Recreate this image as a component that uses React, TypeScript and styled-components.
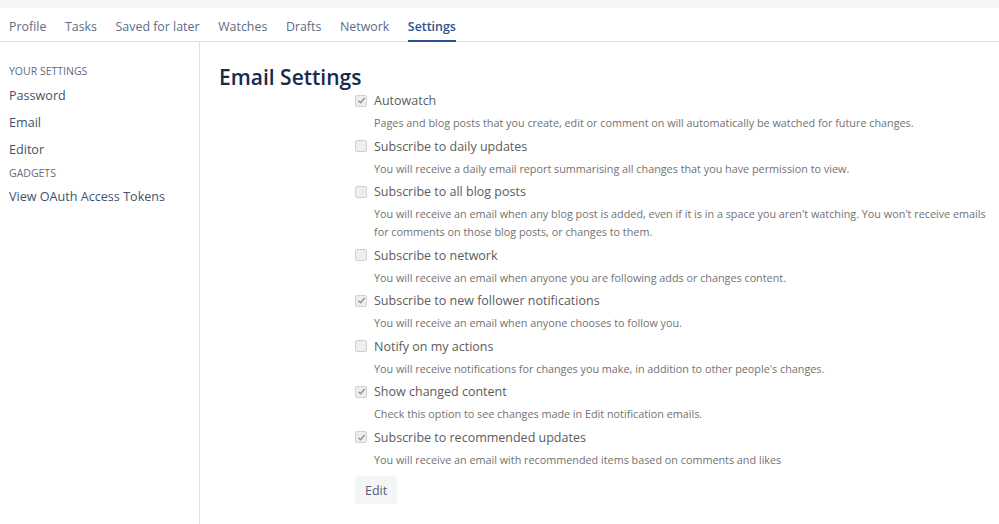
import React from 'react';
import styled, { createGlobalStyle } from 'styled-components';

const GlobalStyle = createGlobalStyle`
  html, body {
    margin: 0;
    padding: 0;
    background: #fff;
    font-family: "Open Sans", "Noto Sans", sans-serif;
  }
`;

type Option = {
  label: string;
  description: string;
  checked: boolean;
};

const options: Option[] = [
  {
    label: 'Autowatch',
    description:
      'Pages and blog posts that you create, edit or comment on will automatically be watched for future changes.',
    checked: true,
  },
  {
    label: 'Subscribe to daily updates',
    description: 'You will receive a daily email report summarising all changes that you have permission to view.',
    checked: false,
  },
  {
    label: 'Subscribe to all blog posts',
    description:
      "You will receive an email when any blog post is added, even if it is in a space you aren't watching. You won't receive emails for comments on those blog posts, or changes to them.",
    checked: false,
  },
  {
    label: 'Subscribe to network',
    description: 'You will receive an email when anyone you are following adds or changes content.',
    checked: false,
  },
  {
    label: 'Subscribe to new follower notifications',
    description: 'You will receive an email when anyone chooses to follow you.',
    checked: true,
  },
  {
    label: 'Notify on my actions',
    description: "You will receive notifications for changes you make, in addition to other people's changes.",
    checked: false,
  },
  {
    label: 'Show changed content',
    description: 'Check this option to see changes made in Edit notification emails.',
    checked: true,
  },
  {
    label: 'Subscribe to recommended updates',
    description: 'You will receive an email with recommended items based on comments and likes',
    checked: true,
  },
];

const tabs = ['Profile', 'Tasks', 'Saved for later', 'Watches', 'Drafts', 'Network', 'Settings'];

const App: React.FC = () => {
  return (
    <Page>
      <GlobalStyle />
      <TopStrip />
      <TabBar>
        {tabs.map((t) => (
          <Tab key={t} active={t === 'Settings'}>
            {t}
          </Tab>
        ))}
      </TabBar>
      <Body>
        <Sidebar>
          <SideHeading>Your Settings</SideHeading>
          <SideLink>Password</SideLink>
          <SideLink>Email</SideLink>
          <SideLink>Editor</SideLink>
          <SideHeading second>Gadgets</SideHeading>
          <SideLink>View OAuth Access Tokens</SideLink>
        </Sidebar>
        <Content>
          <Title>Email Settings</Title>
          <Form>
            {options.map((o) => (
              <Field key={o.label}>
                <LabelRow>
                  <Box>
                    {o.checked && (
                      <svg width="9" height="9" viewBox="0 0 9 9">
                        <path d="M1.5 4.8 L3.6 6.8 L7.6 2" fill="none" stroke="#8f8f8f" strokeWidth="1.4" />
                      </svg>
                    )}
                  </Box>
                  <Label>{o.label}</Label>
                </LabelRow>
                <Description>{o.description}</Description>
              </Field>
            ))}
            <EditButton>Edit</EditButton>
          </Form>
        </Content>
      </Body>
    </Page>
  );
};

const Page = styled.div`
  width: 999px;
  height: 524px;
  overflow: hidden;
  display: flex;
  flex-direction: column;
`;

const TopStrip = styled.div`
  height: 8px;
  background: #f4f5f7;
`;

const TabBar = styled.div`
  display: flex;
  gap: 18.6px;
  padding: 0 9px;
  height: 33px;
  border-bottom: 1px solid #dfe1e6;
`;

const Tab = styled.div<{ active?: boolean }>`
  display: flex;
  align-items: center;
  padding-top: 4px;
  font-size: 12.4px;
  color: ${({ active }) => (active ? '#2a5291' : '#5e6c84')};
  font-weight: ${({ active }) => (active ? 600 : 400)};
  border-bottom: 2px solid ${({ active }) => (active ? '#2a5291' : 'transparent')};
  margin-bottom: -1px;
`;

const Body = styled.div`
  flex: 1;
  display: flex;
`;

const Sidebar = styled.div`
  width: 190px;
  flex-shrink: 0;
  border-right: 1px solid #dfe1e6;
  padding: 21px 0 0 9px;
  display: flex;
  flex-direction: column;
`;

const SideHeading = styled.div<{ second?: boolean }>`
  font-size: 10.5px;
  text-transform: uppercase;
  color: #5e6c84;
  line-height: 16px;
  margin-top: ${({ second }) => (second ? '1px' : '0')};
  margin-bottom: ${({ second }) => (second ? '3px' : '4px')};
`;

const SideLink = styled.div`
  font-size: 12.6px;
  color: #42526e;
  line-height: 18px;
  padding: 4px 0 5px;
`;

const Content = styled.div`
  flex: 1;
  padding: 21px 10px 0 19px;
`;

const Title = styled.h1`
  margin: 0;
  font-size: 21px;
  font-weight: 600;
  color: #172b4d;
  line-height: 28px;
`;

const Form = styled.div`
  padding-left: 136px;
  margin-top: -2px;
  display: flex;
  flex-direction: column;
  align-items: flex-start;
`;

const Field = styled.div`
  display: flex;
  flex-direction: column;
  padding-bottom: 2.5px;
`;

const LabelRow = styled.div`
  display: flex;
  align-items: center;
  height: 23px;
`;

const Box = styled.span`
  width: 10px;
  height: 10px;
  border: 1px solid #d0d0d0;
  border-radius: 2px;
  background: #eeeeee;
  margin-right: 7px;
  display: flex;
  align-items: center;
  justify-content: center;
`;

const Label = styled.span`
  font-size: 12.5px;
  color: #5c5c5c;
`;

const Description = styled.div`
  margin-left: 19px;
  font-size: 10.8px;
  line-height: 18px;
  color: #727272;
  padding-top: 2px;
`;

const EditButton = styled.button`
  margin-top: 5px;
  font-family: inherit;
  font-size: 12.5px;
  color: #505f79;
  background: #f4f5f7;
  border: none;
  border-radius: 3px;
  padding: 0 10px;
  height: 28px;
`;

export default App;
